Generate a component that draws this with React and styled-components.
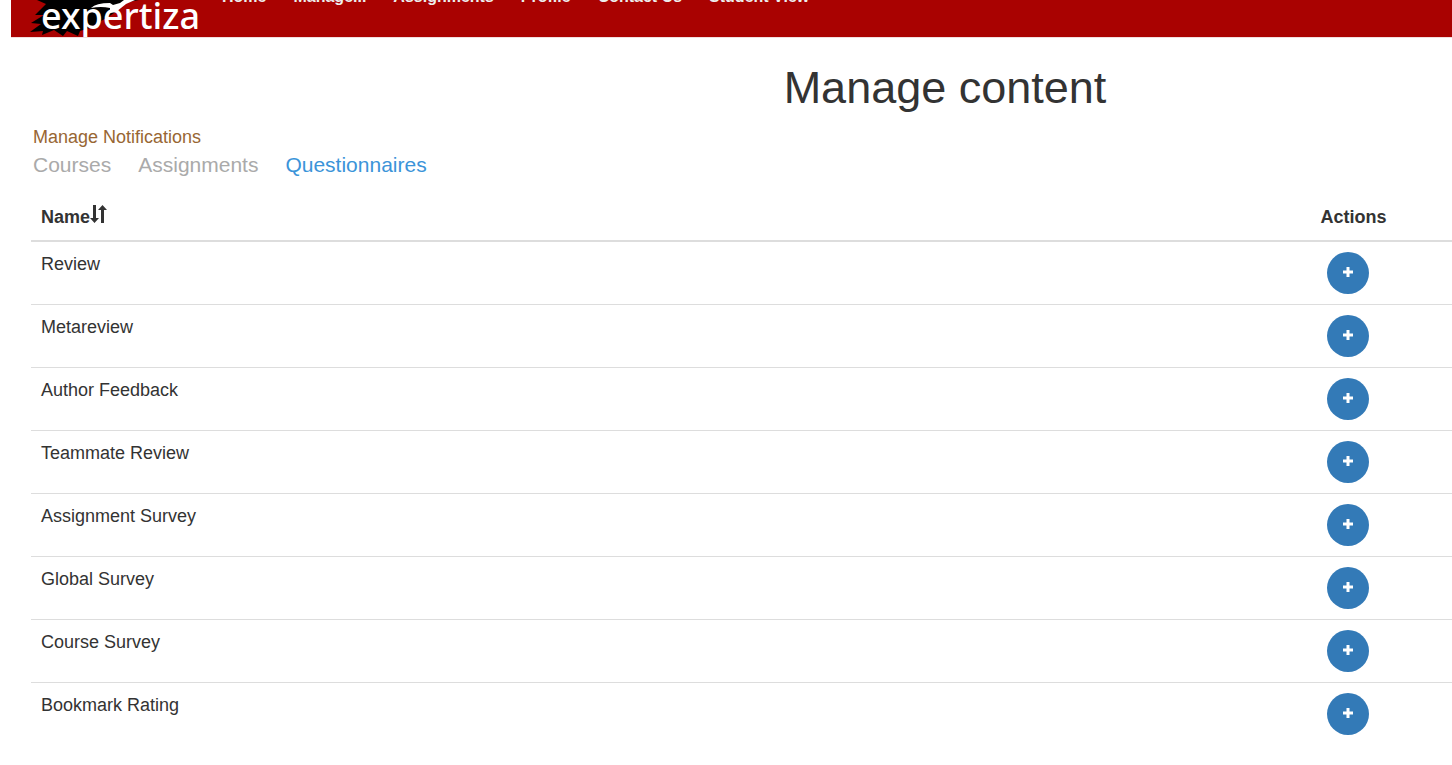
import React from "react"
import styled, { createGlobalStyle } from "styled-components"

const GlobalStyle = createGlobalStyle`
  * {
    box-sizing: border-box;
  }
  html {
    overflow-x: hidden;
  }
  body {
    margin: 0;
    background: #fff;
    color: #333;
    font-family: "Liberation Sans", Arial, sans-serif;
    font-size: 18px;
    line-height: 26px;
    overflow-x: hidden;
  }
  a {
    text-decoration: none;
  }
`

const Page = styled.div`
  min-width: 1868px;
  margin-left: 11px;
`

const Header = styled.header`
  display: flex;
  align-items: flex-end;
  height: 38px;
  background: #a90201;
  border-bottom: 1px solid #f3dddd;
  overflow: hidden;
`

const Brand = styled.a`
  display: grid;
  width: 172px;
  height: 37px;
  margin-left: 19px;
  color: #fff;

  > * {
    grid-area: 1 / 1;
  }
`

const BrandName = styled.span`
  padding-left: 11px;
  font-family: "Noto Sans", sans-serif;
  font-size: 36px;
  font-weight: 500;
  line-height: 32px;
  z-index: 1;
`

const Nav = styled.nav`
  display: flex;
  gap: 27px;
  height: 50px;
  margin-left: 20px;

  a {
    color: #eee;
    font-size: 16px;
    font-weight: 700;
    line-height: 20px;
  }
`

const Content = styled.main`
  padding: 0 20px;
`

const Title = styled.h1`
  margin: 25px 0 0;
  font-size: 45px;
  font-weight: 400;
  line-height: 50px;
  text-align: center;
`

const NoticeLink = styled.a`
  display: block;
  width: fit-content;
  margin: 11px 0 0 2px;
  color: #986633;
`

const Tabs = styled.div`
  display: flex;
  gap: 27px;
  padding: 1px 2px;
  font-size: 21px;
  line-height: 28px;
`

const Tab = styled.a`
  color: ${props => (props.$active ? "#3b94d9" : "#aaa")};
`

const Table = styled.table`
  width: 100%;
  margin-top: 11px;
  border-collapse: collapse;
  table-layout: fixed;

  th,
  td {
    padding: 10px;
    text-align: left;
    vertical-align: top;
  }
  th {
    height: 50px;
    border-bottom: 2px solid #ddd;
    vertical-align: bottom;
  }
  th:first-child {
    width: 70%;
  }
  td {
    height: 63px;
    border-bottom: 1px solid #ddd;
    line-height: 24px;
  }
  tr:last-child td {
    border-bottom: 0;
  }
`

const SortButton = styled.button`
  display: inline-flex;
  padding: 0;
  border: 0;
  background: none;
  color: inherit;
  vertical-align: text-bottom;
`

const AddButton = styled.button`
  display: flex;
  align-items: center;
  justify-content: center;
  width: 42px;
  height: 42px;
  margin-left: 6px;
  padding: 0 0 2px;
  border: 0;
  border-radius: 50%;
  background: #337ab7;
  color: #fff;
`

const Feather = () => (
  <svg width="172" height="37" viewBox="0 0 172 37" aria-hidden="true">
    <path
      d="M7 0 L16 4 L5 15 L14 15 L1 23 L11 24 L0 32 L13 31 L12 35 L24 30 L33 36 L37 31 L48 36 L50 31 L60 28 L66 24 L78 17 L84 13 L90 7 L98 2 L109 0 Z"
      fill="#000"
    />
    <path d="M61 8 Q66 3 80 3 L83 5 L90 3 L94 0 H105 L96 4 L86 12 L80 13 L80 8 Q71 6 61 8 Z" fill="#fff" />
  </svg>
)

const SortIcon = () => (
  <svg width="17" height="22" viewBox="0 0 17 22" fill="currentColor" aria-hidden="true">
    <path d="M3 0h3v13h3l-4.5 5l-4.5-5h3z" />
    <path d="M11 18h3V5h3l-4.5-5l-4.5 5h3z" />
  </svg>
)

const PlusIcon = () => (
  <svg width="10" height="10" viewBox="0 0 10 10" fill="currentColor" aria-hidden="true">
    <path d="M3.5 0h3v3.5H10v3H6.5V10h-3V6.5H0v-3h3.5z" />
  </svg>
)

const links = ["Home", "Manage...", "Assignments", "Profile", "Contact Us", "Student View"]

const tabs = ["Courses", "Assignments", "Questionnaires"]

const questionnaires = [
  "Review",
  "Metareview",
  "Author Feedback",
  "Teammate Review",
  "Assignment Survey",
  "Global Survey",
  "Course Survey",
  "Bookmark Rating"
]

const App = () => (
  <>
    <GlobalStyle />
    <Page>
      <Header>
        <Brand href="#">
          <Feather />
          <BrandName>expertiza</BrandName>
        </Brand>
        <Nav>
          {links.map(link => (
            <a href="#" key={link}>{link}</a>
          ))}
        </Nav>
      </Header>
      <Content>
        <Title>Manage content</Title>
        <NoticeLink href="#">Manage Notifications</NoticeLink>
        <Tabs>
          {tabs.map(tab => (
            <Tab href="#" key={tab} $active={tab === "Questionnaires"}>{tab}</Tab>
          ))}
        </Tabs>
        <Table>
          <thead>
            <tr>
              <th>
                Name
                <SortButton aria-label="Sort by name">
                  <SortIcon />
                </SortButton>
              </th>
              <th>Actions</th>
            </tr>
          </thead>
          <tbody>
            {questionnaires.map(name => (
              <tr key={name}>
                <td>{name}</td>
                <td>
                  <AddButton aria-label={`Add ${name}`}>
                    <PlusIcon />
                  </AddButton>
                </td>
              </tr>
            ))}
          </tbody>
        </Table>
      </Content>
    </Page>
  </>
)

export default App
